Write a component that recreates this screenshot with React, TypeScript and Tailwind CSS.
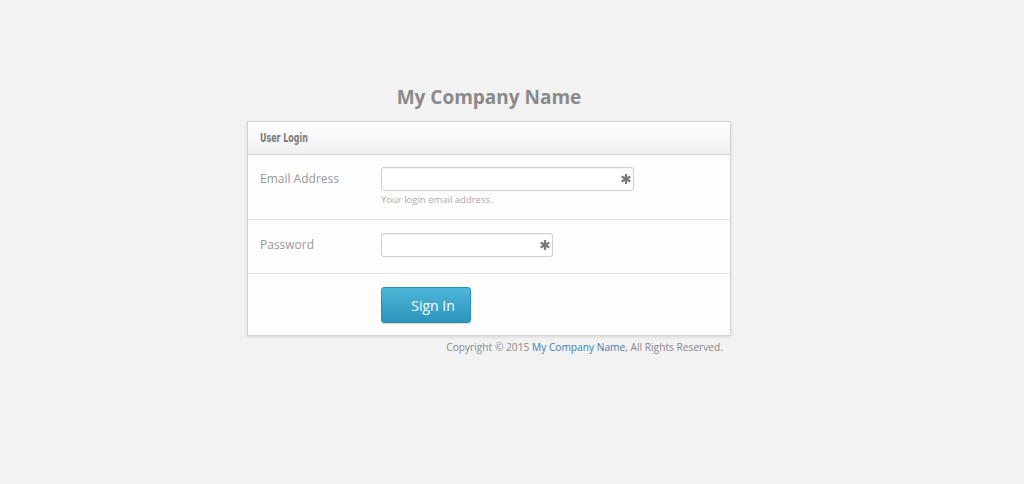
import React from "react";

function Asterisk() {
    return (
        <svg width="10" height="10" viewBox="0 0 10 10" className="text-[#7a7a7a]">
            <g stroke="currentColor" strokeWidth="2.2" strokeLinecap="butt">
                <line x1="5" y1="0" x2="5" y2="10" />
                <line x1="0.7" y1="2.5" x2="9.3" y2="7.5" />
                <line x1="0.7" y1="7.5" x2="9.3" y2="2.5" />
            </g>
        </svg>
    );
}

function Field({ width }: { width: string }) {
    return (
        <div className={`relative h-[24px] ${width} rounded-[3px] border border-[#cfcfcf] bg-white shadow-[inset_0_1px_1px_rgba(0,0,0,0.05)]`}>
            <span className="absolute right-[2px] top-[6px]">
                <Asterisk />
            </span>
        </div>
    );
}

export default function App() {
    return (
        <div className="min-h-[484px] w-full bg-[#f2f2f2] pt-[83px] font-['Open_Sans',sans-serif]">
            <div className="ml-[247px] w-[484px]">
                <h1 className="mb-[10px] text-center text-[19px] font-bold leading-[28px] text-[#8a8a8a]">
                    My Company Name
                </h1>
                <div className="border border-[#d3d3d3] bg-[#fdfdfd] shadow-[0_1px_3px_rgba(0,0,0,0.12)]">
                    <div className="flex h-[33px] items-center border-b border-[#cdcdcd] bg-gradient-to-b from-white to-[#f0f0f0] px-[12px]">
                        <span className="inline-block origin-left scale-x-[0.68] text-[13px] font-bold text-[#7a7a7a] font-['DejaVu_Sans_Condensed','DejaVu_Sans',sans-serif]">
                            User Login
                        </span>
                    </div>
                    <div className="flex border-b border-[#e3e3e3] pb-[12px] pt-[12px]">
                        <div className="w-[133px] pl-[12px] pt-[3px] text-[12px] leading-[18px] text-[#999]">Email Address</div>
                        <div>
                            <Field width="w-[253px]" />
                            <div className="mt-[2px] text-[9.5px] leading-[14px] text-[#aaa]">Your login email address.</div>
                        </div>
                    </div>
                    <div className="flex border-b border-[#e3e3e3] pb-[16px] pt-[13px]">
                        <div className="w-[133px] pl-[12px] pt-[3px] text-[12px] leading-[18px] text-[#999]">Password</div>
                        <Field width="w-[172px]" />
                    </div>
                    <div className="flex pb-[12px] pt-[13px]">
                        <div className="w-[133px]" />
                        <button className="h-[36px] w-[90px] rounded-[3px] border border-[#2a8fb4] bg-gradient-to-b from-[#4db6d9] to-[#2c95bb] pl-[14px] text-[14px] text-white shadow-[0_1px_1px_rgba(0,0,0,0.15)]">
                            Sign In
                        </button>
                    </div>
                </div>
                <div className="pr-[8px] pt-[3px] text-right text-[10.2px] leading-[16px] text-[#888]">
                    Copyright © 2015 <span className="text-[#3c7fb1]">My Company Name</span>, All Rights Reserved.
                </div>
            </div>
        </div>
    );
}
